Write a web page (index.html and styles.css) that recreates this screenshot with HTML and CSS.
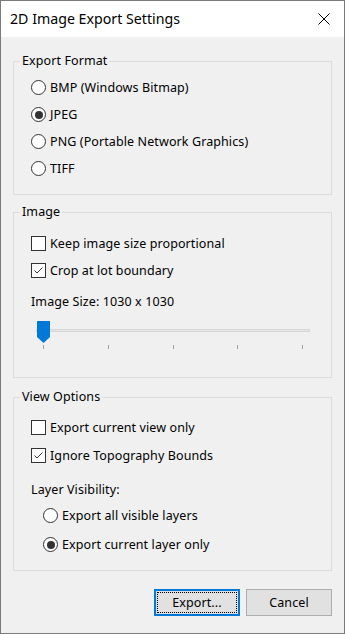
FILE: index.html
```html
<!DOCTYPE html>
<html>
<head>
<meta charset="utf-8">
<link rel="stylesheet" href="styles.css">
</head>
<body>
<div class="window">
  <div class="titlebar">
    <span class="title">2D Image Export Settings</span>
    <svg class="close" width="12" height="12" viewBox="0 0 12 12"><path d="M0.5 0.5 L11.5 11.5 M11.5 0.5 L0.5 11.5" stroke="#000" stroke-width="1" fill="none"/></svg>
  </div>
  <div class="body">
    <fieldset class="group g-format">
      <legend>Export Format</legend>
      <div class="inner">
        <div class="row"><span class="rb"></span>BMP (Windows Bitmap)</div>
        <div class="row"><span class="rb on"></span>JPEG</div>
        <div class="row"><span class="rb"></span>PNG (Portable Network Graphics)</div>
        <div class="row"><span class="rb"></span>TIFF</div>
      </div>
    </fieldset>

    <fieldset class="group g-image">
      <legend>Image</legend>
      <div class="inner">
        <div class="row"><span class="cb"></span>Keep image size proportional</div>
        <div class="row"><span class="cb"><svg width="13" height="13" viewBox="0 0 13 13"><polyline points="2.5,6.5 5,9 10.5,3.5" fill="none" stroke="#333" stroke-width="1"/></svg></span>Crop at lot boundary</div>
        <div class="label size-label">Image Size: 1030 x 1030</div>
        <div class="slider">
          <div class="track"></div>
          <svg class="thumb" width="13" height="22" viewBox="0 0 13 22"><path d="M0 0 H13 V16 L6.5 22 L0 16 Z" fill="#0078d7"/></svg>
          <div class="ticks"><span></span><span></span><span></span><span></span><span></span></div>
        </div>
      </div>
    </fieldset>

    <fieldset class="group g-view">
      <legend>View Options</legend>
      <div class="inner">
        <div class="row crow"><span class="cb"></span>Export current view only</div>
        <div class="row crow"><span class="cb"><svg width="13" height="13" viewBox="0 0 13 13"><polyline points="2.5,6.5 5,9 10.5,3.5" fill="none" stroke="#333" stroke-width="1"/></svg></span>Ignore Topography Bounds</div>
        <div class="label layer-label">Layer Visibility:</div>
        <div class="sub">
          <div class="row rrow"><span class="rb"></span>Export all visible layers</div>
          <div class="row rrow"><span class="rb on"></span>Export current layer only</div>
        </div>
      </div>
    </fieldset>

    <div class="buttons">
      <button class="btn default"><span class="focus">Export...</span></button>
      <button class="btn">Cancel</button>
    </div>
  </div>
</div>
</body>
</html>
```

FILE: styles.css
```css
html, body {
  margin: 0;
  padding: 0;
  background: #f0f0f0;
}

.window {
  width: 345px;
  height: 634px;
  box-sizing: border-box;
  border: 1px solid #7a7a7a;
  background: #f0f0f0;
  display: flex;
  flex-direction: column;
  font-family: "Noto Sans", "DejaVu Sans", sans-serif;
  font-size: 12.5px;
  letter-spacing: 0.1px;
  color: #000;
}

.titlebar {
  height: 36px;
  background: #fff;
  display: flex;
  align-items: center;
  justify-content: space-between;
  padding: 0 14px 0 9px;
  flex: none;
}

.title {
  font-size: 14.2px;
  letter-spacing: 0;
  line-height: 20px;
}

.close {
  display: block;
}

.body {
  flex: 1;
  padding: 16px 12px 0 12px;
  display: flex;
  flex-direction: column;
}

.group {
  margin: 0;
  padding: 0;
  border: 1px solid #dcdcdc;
  min-width: 0;
}

.group legend {
  margin-left: 6px;
  padding: 0 2px;
  line-height: 16px;
}

.inner {
  padding-left: 17px;
  display: flex;
  flex-direction: column;
}

.row {
  display: flex;
  align-items: center;
  height: 27px;
  white-space: nowrap;
}

.rb {
  width: 15px;
  height: 15px;
  box-sizing: border-box;
  border: 1px solid #333;
  border-radius: 50%;
  background: #fff;
  margin-right: 4px;
  flex: none;
  display: flex;
  align-items: center;
  justify-content: center;
}

.rb.on::after {
  content: "";
  width: 8px;
  height: 8px;
  border-radius: 50%;
  background: #333;
}

.cb {
  width: 15px;
  height: 15px;
  box-sizing: border-box;
  border: 1px solid #333;
  background: #fff;
  margin-right: 4px;
  flex: none;
  display: flex;
  align-items: center;
  justify-content: center;
}

.cb svg {
  display: block;
}

.label {
  line-height: 16px;
}

/* Export format */
.g-format .inner {
  padding-top: 5px;
  padding-bottom: 12px;
}

/* Image */
.g-image {
  margin-top: 9px;
}

.g-image .inner {
  padding-top: 10px;
  padding-bottom: 28px;
}

.size-label {
  margin-top: 10px;
}

.slider {
  position: relative;
  margin-top: 11px;
  margin-left: 5px;
  width: 274px;
  height: 28px;
  display: flex;
  flex-direction: column;
}

.track {
  margin-top: 8px;
  height: 4px;
  box-sizing: border-box;
  border: 1px solid #d6d6d6;
  background: #e7e7e7;
}

.thumb {
  position: absolute;
  left: 1px;
  top: 0;
}

.ticks {
  margin-top: 13px;
  margin-left: 7px;
  width: 260px;
  height: 4px;
  display: flex;
  justify-content: space-between;
}

.ticks span {
  width: 1px;
  height: 4px;
  background: #a0a0a0;
}

/* View options */
.g-view {
  margin-top: 11px;
}

.g-view .inner {
  padding-top: 8px;
  padding-bottom: 11px;
}

.crow {
  height: 28px;
}

.layer-label {
  margin-top: 13px;
}

.sub {
  margin-top: 3px;
  padding-left: 12px;
  display: flex;
  flex-direction: column;
}

.rrow {
  height: 29px;
}

/* Buttons */
.buttons {
  margin-top: 18px;
  display: flex;
  justify-content: flex-end;
  gap: 6px;
}

.btn {
  width: 86px;
  height: 27px;
  box-sizing: border-box;
  border: 1px solid #adadad;
  background: #e1e1e1;
  font-family: "Noto Sans", "DejaVu Sans", sans-serif;
  font-size: 12.5px;
  letter-spacing: 0.1px;
  color: #000;
  padding: 0;
  margin: 0;
  display: flex;
  align-items: center;
  justify-content: center;
}

.btn.default {
  border: 2px solid #0078d7;
  padding: 1px;
}

.btn .focus {
  flex: 1;
  align-self: stretch;
  display: flex;
  align-items: center;
  justify-content: center;
  outline: 1px dotted #000;
  outline-offset: -1px;
}
```
